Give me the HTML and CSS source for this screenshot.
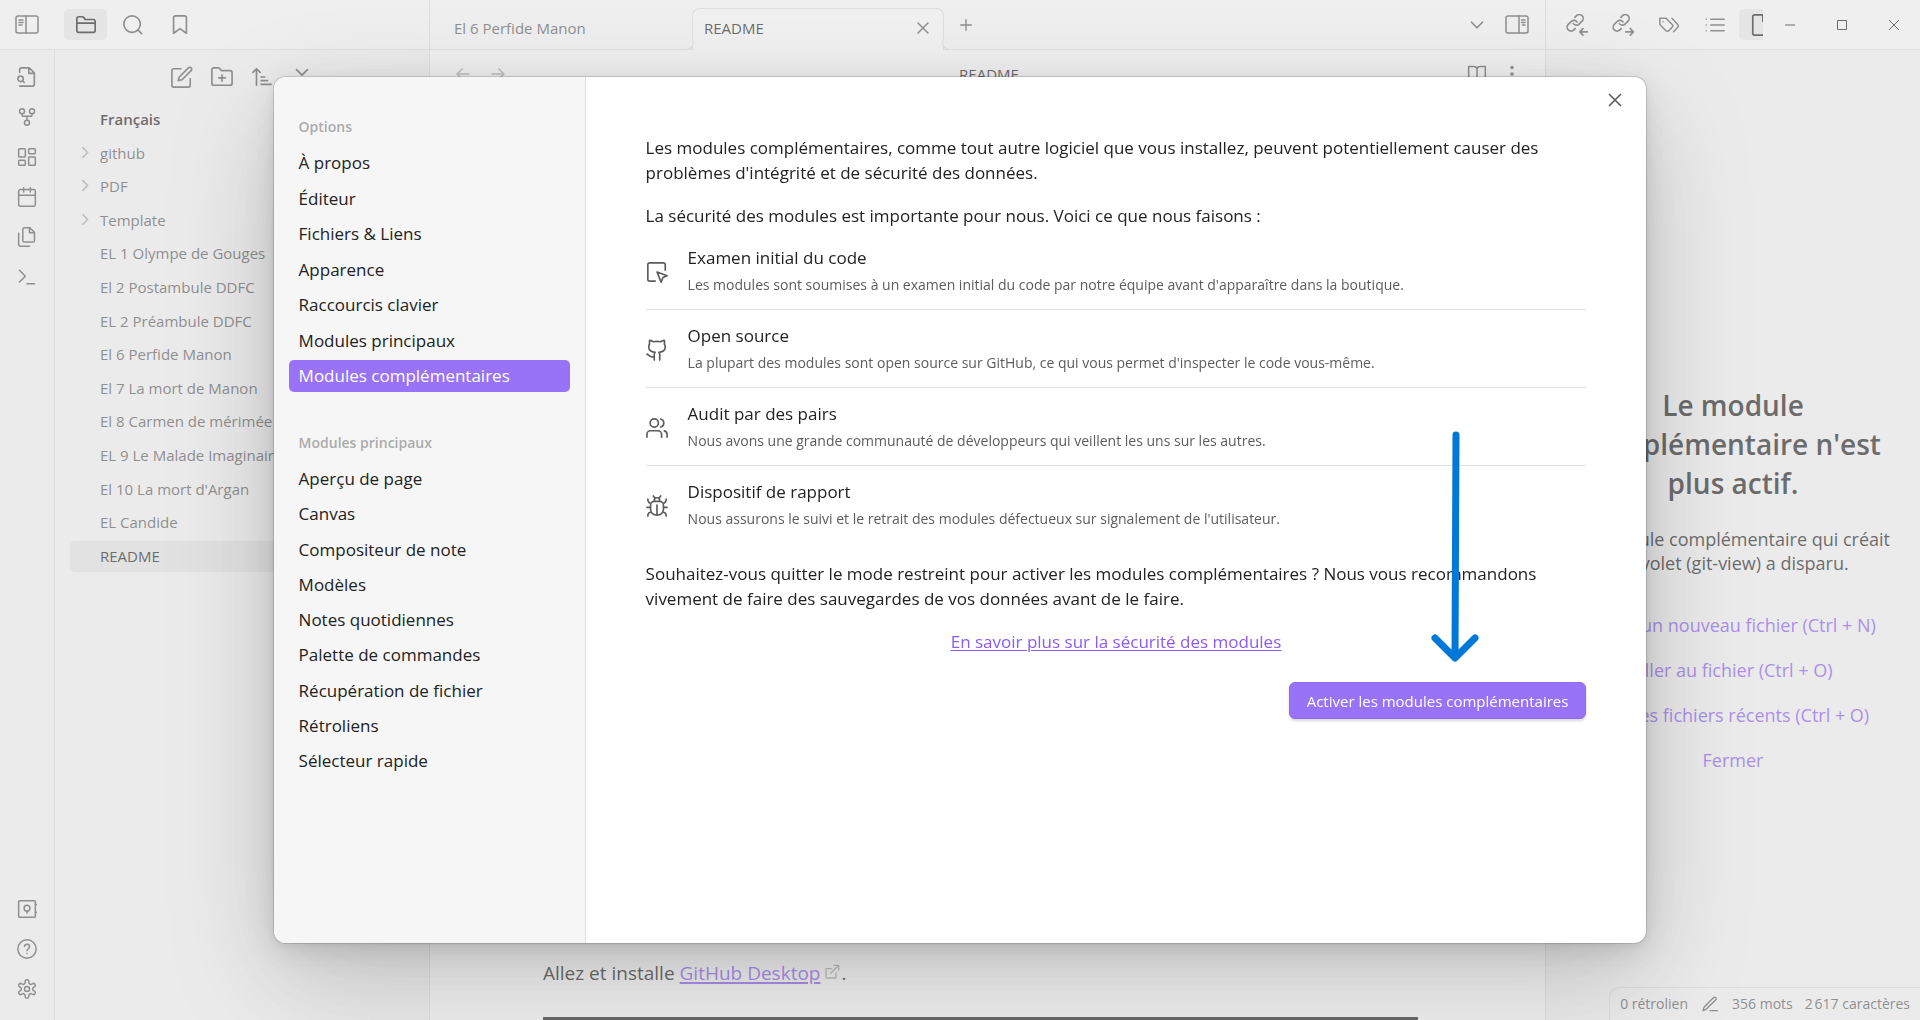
FILE: index.html
```html
<!DOCTYPE html>
<html lang="fr">
<head>
<meta charset="utf-8">
<meta name="viewport" content="width=device-width, initial-scale=1">
<title>README - Obsidian</title>
<link rel="stylesheet" href="styles.css">
</head>
<body>
<svg class="sprite" aria-hidden="true">
  <symbol id="panel-left" viewBox="0 0 24 24"><rect x="1" y="3" width="22" height="17" rx="2"/><path d="M11 3v17M4 7h4M4 9.500h4M4 12h3"/></symbol>
  <symbol id="panel-right" viewBox="0 0 24 24"><rect x="1" y="3" width="22" height="17" rx="2"/><path d="M14 3v17M16.500 7H20M16.500 9.500H20M17.500 12H20"/></symbol>
  <symbol id="folder" viewBox="0 0 24 24"><path d="M4 20h16a2 2 0 0 0 2-2V8a2 2 0 0 0-2-2h-7.930a2 2 0 0 1-1.660-.9l-.82-1.200A2 2 0 0 0 7.930 3H4a2 2 0 0 0-2 2v13c0 1.100.9 2 2 2ZM2 10h20"/></symbol>
  <symbol id="search" viewBox="0 0 24 24"><circle cx="11" cy="11" r="9"/><path d="m21.500 21.500-4-4"/></symbol>
  <symbol id="bookmark" viewBox="0 0 24 24"><path d="m19 21-7-5-7 5V4a2 2 0 0 1 2-2h10a2 2 0 0 1 2 2v17z"/></symbol>
  <symbol id="file-search" viewBox="0 0 24 24"><path d="M4 22h14a2 2 0 0 0 2-2V7.500L14.500 2H6a2 2 0 0 0-2 2v3M14 2v6h6M9 18l-1.500-1.500"/><circle cx="5" cy="14" r="3"/></symbol>
  <symbol id="fork" viewBox="0 0 24 24"><circle cx="12" cy="19" r="3"/><circle cx="6" cy="5" r="3"/><circle cx="18" cy="5" r="3"/><path d="M18 8v2c0 .6-.4 1-1 1H7c-.6 0-1-.4-1-1V8M12 11v5"/></symbol>
  <symbol id="dashboard" viewBox="0 0 24 24"><rect x="2" y="2" width="8" height="10" rx="1"/><rect x="14" y="2" width="8" height="6" rx="1"/><rect x="14" y="12" width="8" height="10" rx="1"/><rect x="2" y="16" width="8" height="6" rx="1"/></symbol>
  <symbol id="calendar" viewBox="0 0 24 24"><rect x="2" y="3" width="20" height="20" rx="2"/><path d="M16 1v5M8 1v5M2 10h20"/></symbol>
  <symbol id="files" viewBox="0 0 24 24"><path d="M15.500 1H8.600C7.700 1 7 1.700 7 2.600v13.800c0 .9.700 1.600 1.600 1.600h10.800c.9 0 1.600-.7 1.600-1.600V6.500L15.500 1zM2 7.600v13.800c0 .9.700 1.600 1.600 1.600H15M15 1v6h6"/></symbol>
  <symbol id="terminal" viewBox="0 0 24 24"><path d="m3 18 7-7-7-7M12 20h9"/></symbol>
  <symbol id="vault" viewBox="0 0 24 24"><rect x="2" y="2" width="20" height="20" rx="1"/><circle cx="12" cy="11" r="3.500"/><path d="M12 14.500V17M22 6.500h1.500M22 16h1.500"/></symbol>
  <symbol id="help" viewBox="0 0 24 24"><circle cx="12" cy="12" r="11"/><path d="M9 9a3 3 0 0 1 6 .5c0 2-3 2.500-3 4.500M12 17.500h.01"/></symbol>
  <symbol id="gear" viewBox="0 0 24 24"><path d="M12.220 1h-.44a2 2 0 0 0-2 2v1.180a2 2 0 0 1-1 1.730l-.43.250a2 2 0 0 1-2 0l-1.150-.58a2 2 0 0 0-2.730.73l-.22.380a2 2 0 0 0 .73 2.730l1.150.6a2 2 0 0 1 1 1.720v.51a2 2 0 0 1-1 1.740l-1.150.59a2 2 0 0 0-.73 2.730l.22.380a2 2 0 0 0 2.730.73l1.150-.58a2 2 0 0 1 2 0l.43.250a2 2 0 0 1 1 1.730V21a2 2 0 0 0 2 2h.44a2 2 0 0 0 2-2v-1.180a2 2 0 0 1 1-1.730l.43-.25a2 2 0 0 1 2 0l1.150.58a2 2 0 0 0 2.730-.73l.22-.39a2 2 0 0 0-.73-2.730l-1.150-.58a2 2 0 0 1-1-1.740v-.5a2 2 0 0 1 1-1.740l1.150-.59a2 2 0 0 0 .73-2.730l-.22-.38a2 2 0 0 0-2.730-.73l-1.150.58a2 2 0 0 1-2 0l-.43-.25a2 2 0 0 1-1-1.730V3a2 2 0 0 0-2-2z"/><circle cx="12" cy="12" r="3"/></symbol>
  <symbol id="edit" viewBox="0 0 24 24"><path d="M11 3H3a2 2 0 0 0-2 2v16a2 2 0 0 0 2 2h16a2 2 0 0 0 2-2v-7M19 2a2.120 2.120 0 0 1 3 3L12 15l-4 1 1-4L19 2z"/></symbol>
  <symbol id="folder-plus" viewBox="0 0 24 24"><path d="M3 21h18a2 2 0 0 0 2-2V7a2 2 0 0 0-2-2h-8.930a2 2 0 0 1-1.660-.9l-.82-1.200A2 2 0 0 0 7.930 2H3a2 2 0 0 0-2 2v15c0 1.100.9 2 2 2ZM12 9.500v7M8.500 13h7"/></symbol>
  <symbol id="sort" viewBox="0 0 24 24"><path d="m2 7 4-4 4 4M6 3v18M11 12h4M11 16h7M11 20h11"/></symbol>
  <symbol id="collapse" viewBox="0 0 24 24"><path d="m6 4 6 6 6-6M6 22l6-6 6 6"/></symbol>
  <symbol id="chevron-right" viewBox="0 0 24 24"><path d="m7 3 9 9-9 9"/></symbol>
  <symbol id="chevron-down" viewBox="0 0 24 24"><path d="m6 9 6 6 6-6"/></symbol>
  <symbol id="x" viewBox="0 0 24 24"><path d="M18 6 6 18M6 6l12 12"/></symbol>
  <symbol id="plus" viewBox="0 0 24 24"><path d="M12 4v16M4 12h16"/></symbol>
  <symbol id="arrow-left" viewBox="0 0 24 24"><path d="m11 4-8 8 8 8M21 12H3"/></symbol>
  <symbol id="arrow-right" viewBox="0 0 24 24"><path d="m13 4 8 8-8 8M3 12h18"/></symbol>
  <symbol id="book" viewBox="0 0 24 24"><path d="M2 3h6a4 4 0 0 1 4 4v14a3 3 0 0 0-3-3H2zM22 3h-6a4 4 0 0 0-4 4v14a3 3 0 0 1 3-3h7z"/></symbol>
  <symbol id="dots" viewBox="0 0 24 24"><g class="filled"><circle cx="12" cy="5" r="1"/><circle cx="12" cy="12" r="1"/><circle cx="12" cy="19" r="1"/></g></symbol>
  <symbol id="chain" viewBox="0 0 24 24"><path d="M8 10.500a4.200 4.200 0 0 0 6.300.5l3.200-3.200a4.200 4.200 0 0 0-6-6L9.700 3.600M12 8.700a4.200 4.200 0 0 0-6.300-.5l-3.200 3.200a4.200 4.200 0 0 0 6 6l1.500-1.500"/></symbol>
  <symbol id="link-in" viewBox="0 0 24 24"><use href="#chain"/><path d="M23.500 19.500H15M18.500 16 15 19.500l3.500 3.500"/></symbol>
  <symbol id="link-out" viewBox="0 0 24 24"><use href="#chain"/><path d="M15 19.500h8.500M20 16l3.500 3.500L20 23"/></symbol>
  <symbol id="tags" viewBox="0 0 24 24"><path d="M8.500 4H1v7.500l7.290 7.290c.94.940 2.480.940 3.420 0l4.080-4.080c.94-.94.940-2.480 0-3.420L8.500 4ZM5 8.010V8M15.500 4l7 7.300a2.400 2.400 0 0 1 0 3.400L17.500 20"/></symbol>
  <symbol id="list" viewBox="0 0 24 24"><path d="M7 5h16M7 12h16M7 19h16M1.500 5h.01M1.500 12h.01M1.500 19h.01"/></symbol>
  <symbol id="file" viewBox="0 0 24 24"><path d="M15 1H5a2 2 0 0 0-2 2v18a2 2 0 0 0 2 2h14a2 2 0 0 0 2-2V7zM14 1v7h7"/></symbol>
  <symbol id="inspect" viewBox="0 0 24 24"><path d="M21 10V4a2 2 0 0 0-2-2H4a2 2 0 0 0-2 2v16a2 2 0 0 0 2 2h6M12 12l4.500 11 2-5 4.500-2Z"/></symbol>
  <symbol id="github" viewBox="0 0 24 24"><path d="M15 23v-5a4.800 4.800 0 0 0-1-3.500c3.500 0 7-2 7-5.500.08-1.250-.27-2.480-1-3.500.28-1.150.28-2.850 0-4 0 0-1 0-4 1.500-2.640-.5-5.360-.5-8 0C5 1.500 4 1.500 4 1.500c-.3 1.150-.3 2.850 0 4A5.400 5.400 0 0 0 3 9c0 3.500 3.500 5.500 7 5.500-.39.490-.68 1.050-.85 1.650-.17.600-.22 1.230-.15 1.850v5M9 19c-5 2-5.500-2-8-2.500"/></symbol>
  <symbol id="users" viewBox="0 0 24 24"><path d="M17 22v-3a4 4 0 0 0-4-4H5a4 4 0 0 0-4 4v3M23 22v-3a4 4 0 0 0-3-3.870M16 2.130a4.500 4.500 0 0 1 0 8.750"/><circle cx="9" cy="6.500" r="4.500"/></symbol>
  <symbol id="bug" viewBox="0 0 24 24"><path d="m8 1 1.880 2.500M14.120 3.500 16 1M9 7V6a3 3 0 1 1 6 0v1M12 22c-3.900 0-7-2.700-7-6v-5a4 4 0 0 1 4-4h6a4 4 0 0 1 4 4v5c0 3.300-3.100 6-7 6M12 21V11M5.530 9C3.600 8.800 2 7.100 2 4.500M5 13.500H1M2 23c0-2.600 1.700-4.400 3.800-4.500M22 4.500c0 2.600-1.600 4.300-3.500 4.500M23 13.500h-4M18.200 18.500c2.100.1 3.800 1.900 3.800 4.500"/></symbol>
  <symbol id="pencil" viewBox="0 0 24 24"><path d="M12 22h11M17 2.500a2.120 2.120 0 0 1 3.500 3.500L6 20l-4.500 2L3 17Z"/></symbol>
  <symbol id="external" viewBox="0 0 24 24"><path d="M18 13v8H3V7h8M15 2h7v7M10 14 22 2"/></symbol>
</svg>

<div class="app">
  <section class="left">
    <header class="bar left-bar">
      <button class="bar-toggle" aria-label="Réduire la barre"><svg class="icon large"><use href="#panel-left"/></svg></button>
      <button class="bar-tab active" aria-label="Fichiers"><svg class="icon"><use href="#folder"/></svg></button>
      <button class="bar-tab" aria-label="Rechercher"><svg class="icon"><use href="#search"/></svg></button>
      <button class="bar-tab" aria-label="Signets"><svg class="icon"><use href="#bookmark"/></svg></button>
    </header>
    <div class="left-body">
      <nav class="ribbon" aria-label="Ruban">
        <button aria-label="Sélecteur rapide"><svg class="icon"><use href="#file-search"/></svg></button>
        <button aria-label="Vue graphique"><svg class="icon small"><use href="#fork"/></svg></button>
        <button aria-label="Canvas"><svg class="icon small"><use href="#dashboard"/></svg></button>
        <button aria-label="Note du jour"><svg class="icon small"><use href="#calendar"/></svg></button>
        <button aria-label="Modèle"><svg class="icon small"><use href="#files"/></svg></button>
        <button aria-label="Commandes"><svg class="icon small"><use href="#terminal"/></svg></button>
        <span class="grow"></span>
        <button aria-label="Coffre"><svg class="icon small"><use href="#vault"/></svg></button>
        <button aria-label="Aide"><svg class="icon small"><use href="#help"/></svg></button>
        <button aria-label="Paramètres"><svg class="icon small"><use href="#gear"/></svg></button>
      </nav>
      <div class="explorer">
        <div class="explorer-tools">
          <button aria-label="Nouvelle note"><svg class="icon"><use href="#edit"/></svg></button>
          <button aria-label="Nouveau dossier"><svg class="icon"><use href="#folder-plus"/></svg></button>
          <button aria-label="Trier"><svg class="icon"><use href="#sort"/></svg></button>
          <button aria-label="Tout replier"><svg class="icon"><use href="#collapse"/></svg></button>
        </div>
        <ul class="tree">
          <li class="tree-root">Français</li>
          <li><svg class="icon caret"><use href="#chevron-right"/></svg>github</li>
          <li><svg class="icon caret"><use href="#chevron-right"/></svg>PDF</li>
          <li><svg class="icon caret"><use href="#chevron-right"/></svg>Template</li>
          <li>EL 1 Olympe de Gouges</li>
          <li>El 2 Postambule DDFC</li>
          <li>EL 2 Préambule DDFC</li>
          <li>El 6 Perfide Manon</li>
          <li>El 7 La mort de Manon</li>
          <li>El 8 Carmen de mérimée</li>
          <li>EL 9 Le Malade Imaginaire</li>
          <li>El 10 La mort d'Argan</li>
          <li>EL Candide</li>
          <li class="current">README</li>
        </ul>
      </div>
    </div>
  </section>

  <main class="center">
    <header class="bar tabs">
      <div class="tab">El 6 Perfide Manon</div>
      <div class="tab open"><span>README</span><button aria-label="Fermer l'onglet"><svg class="icon small"><use href="#x"/></svg></button></div>
      <button class="new-tab" aria-label="Nouvel onglet"><svg class="icon tiny"><use href="#plus"/></svg></button>
      <span class="grow"></span>
      <button class="tab-list" aria-label="Liste des onglets"><svg class="icon"><use href="#chevron-down"/></svg></button>
      <button aria-label="Réduire la barre droite"><svg class="icon large"><use href="#panel-right"/></svg></button>
    </header>
    <div class="view-head">
      <span class="view-side"><button class="faint" aria-label="Précédent"><svg class="icon tiny"><use href="#arrow-left"/></svg></button><button class="faint" aria-label="Suivant"><svg class="icon tiny"><use href="#arrow-right"/></svg></button></span>
      <span class="view-title">README</span>
      <span class="view-side end"><button aria-label="Mode lecture"><svg class="icon small"><use href="#book"/></svg></button><button aria-label="Plus d'options"><svg class="icon"><use href="#dots"/></svg></button></span>
    </div>
    <article class="note">
      <p>Allez et installe <a href="#desktop">GitHub Desktop</a><svg class="icon ext"><use href="#external"/></svg>.</p>
      <hr>
    </article>
  </main>

  <aside class="right">
    <header class="bar right-bar">
      <div class="right-tabs">
        <button class="bar-tab" aria-label="Rétroliens"><svg class="icon"><use href="#link-in"/></svg></button>
        <button class="bar-tab" aria-label="Liens sortants"><svg class="icon"><use href="#link-out"/></svg></button>
        <button class="bar-tab" aria-label="Tags"><svg class="icon small"><use href="#tags"/></svg></button>
        <button class="bar-tab" aria-label="Sommaire"><svg class="icon small"><use href="#list"/></svg></button>
        <button class="bar-tab active" aria-label="git-view"><svg class="icon"><use href="#file"/></svg></button>
      </div>
      <div class="window-buttons">
        <button aria-label="Réduire"><svg class="win"><path d="M1 6h10"/></svg></button>
        <button aria-label="Agrandir"><svg class="win"><path d="M1.500 1.500h9v9h-9z"/></svg></button>
        <button aria-label="Fermer la fenêtre"><svg class="win"><path d="m1 1 10 10M11 1 1 11"/></svg></button>
      </div>
    </header>
    <div class="empty">
      <h2>Le module complémentaire n'est plus actif.</h2>
      <p>Le module complémentaire qui créait ce volet (git-view) a disparu.</p>
      <a href="#new">Créer un nouveau fichier (Ctrl + N)</a>
      <a href="#go">Aller au fichier (Ctrl + O)</a>
      <a href="#recent">Voir les fichiers récents (Ctrl + O)</a>
      <a href="#close">Fermer</a>
    </div>
  </aside>

  <footer class="status">
    <span>0 rétrolien</span>
    <svg class="icon tiny"><use href="#pencil"/></svg>
    <span>356 mots</span>
    <span>2&#8239;617 caractères</span>
  </footer>
</div>

<div class="overlay">
  <div class="modal" role="dialog" aria-modal="true" aria-label="Options">
    <nav class="settings-nav">
      <h3>Options</h3>
      <ul class="options">
        <li><a href="#about">À propos</a></li>
        <li><a href="#editor">Éditeur</a></li>
        <li><a href="#files-links">Fichiers &amp; Liens</a></li>
        <li><a href="#appearance">Apparence</a></li>
        <li><a href="#hotkeys">Raccourcis clavier</a></li>
        <li><a href="#core">Modules principaux</a></li>
        <li><a class="selected" href="#community">Modules complémentaires</a></li>
      </ul>
      <h3>Modules principaux</h3>
      <ul class="core">
        <li><a href="#preview">Aperçu de page</a></li>
        <li><a href="#canvas">Canvas</a></li>
        <li><a href="#composer">Compositeur de note</a></li>
        <li><a href="#templates">Modèles</a></li>
        <li><a href="#daily">Notes quotidiennes</a></li>
        <li><a href="#palette">Palette de commandes</a></li>
        <li><a href="#recovery">Récupération de fichier</a></li>
        <li><a href="#backlinks">Rétroliens</a></li>
        <li><a href="#switcher">Sélecteur rapide</a></li>
      </ul>
    </nav>
    <section class="settings-body">
      <button class="modal-close" aria-label="Fermer"><svg class="icon"><use href="#x"/></svg></button>
      <p>Les modules complémentaires, comme tout autre logiciel que vous installez, peuvent potentiellement causer des problèmes d'intégrité et de sécurité des données.</p>
      <p>La sécurité des modules est importante pour nous. Voici ce que nous faisons :</p>
      <ul class="measures">
        <li><svg class="icon"><use href="#inspect"/></svg><div><h4>Examen initial du code</h4><p>Les modules sont soumises à un examen initial du code par notre équipe avant d'apparaître dans la boutique.</p></div></li>
        <li><svg class="icon"><use href="#github"/></svg><div><h4>Open source</h4><p>La plupart des modules sont open source sur GitHub, ce qui vous permet d'inspecter le code vous-même.</p></div></li>
        <li><svg class="icon"><use href="#users"/></svg><div><h4>Audit par des pairs</h4><p>Nous avons une grande communauté de développeurs qui veillent les uns sur les autres.</p></div></li>
        <li><svg class="icon"><use href="#bug"/></svg><div><h4>Dispositif de rapport</h4><p>Nous assurons le suivi et le retrait des modules défectueux sur signalement de l'utilisateur.</p></div></li>
      </ul>
      <p>Souhaitez-vous quitter le mode restreint pour activer les modules complémentaires ? Nous vous recommandons vivement de faire des sauvegardes de vos données avant de le faire.</p>
      <p class="more"><a href="#security">En savoir plus sur la sécurité des modules</a></p>
      <div class="actions">
        <button class="enable">Activer les modules complémentaires</button>
        <svg class="pointer" viewBox="0 0 48 232" aria-hidden="true"><path d="M25 4 24 227M4 207l20 20 20-20"/></svg>
      </div>
    </section>
  </div>
</div>
</body>
</html>
```

FILE: styles.css
```css
* { box-sizing: border-box; }

body {
  margin: 0;
  height: 100vh;
  overflow: hidden;
  font-family: "Open Sans", "Noto Sans", sans-serif;
  font-size: 15px;
  line-height: 24px;
  color: #5c5c5c;
  background: #ffffff;
}

h2, h3, h4, p, ul { margin: 0; padding: 0; font-size: inherit; }
ul { list-style: none; }

button {
  display: flex;
  align-items: center;
  justify-content: center;
  padding: 0;
  border: 0;
  background: none;
  color: inherit;
  font: inherit;
}

.sprite { display: none; }
.icon {
  flex: none;
  width: 22px;
  height: 22px;
  fill: none;
  stroke: currentColor;
  stroke-width: 1.8;
  stroke-linecap: round;
  stroke-linejoin: round;
}
.icon.large { width: 24px; height: 24px; stroke-width: 1.5; }
.icon.small { width: 20px; height: 20px; }
.icon.tiny { width: 16px; height: 16px; stroke-width: 2; }
.filled { fill: currentColor; }
.grow { flex: 1; }

/* Workspace */
.app {
  display: grid;
  grid-template-columns: 430px 1fr 375px;
  height: 100%;
}
.left, .center, .right { display: flex; flex-direction: column; min-width: 0; min-height: 0; }
.left { border-right: 1px solid #e0e0e0; background: #f6f6f6; }
.right { border-left: 1px solid #e0e0e0; background: #f6f6f6; }

.bar {
  flex: none;
  display: flex;
  align-items: center;
  height: 50px;
  border-bottom: 1px solid #e0e0e0;
  background: #fcfcfc;
}
.bar-toggle { width: 54px; height: 31px; }
.left-bar { gap: 4px; }
.left-bar .bar-toggle { margin-right: 6px; }
.bar-tab { flex: none; width: 43px; height: 31px; border-radius: 5px; }
.bar-tab.active { background: #ececec; color: #222222; }

.left-body { display: flex; flex: 1; min-height: 0; }
.ribbon {
  display: flex;
  flex-direction: column;
  gap: 9px;
  width: 55px;
  padding: 11px 0 16px;
  border-right: 1px solid #e0e0e0;
}
.ribbon button { height: 31px; }

.explorer { flex: 1; min-width: 0; }
.explorer-tools { display: flex; justify-content: center; gap: 18px; padding: 16px 0; }
.tree {
  display: flex;
  flex-direction: column;
  justify-content: space-between;
  min-height: 468px;
  padding: 0 15px;
}
.tree li {
  position: relative;
  padding: 0 8px 0 30px;
  border-radius: 5px;
  line-height: 31px;
  white-space: nowrap;
}
.tree .tree-root { font-weight: 600; color: #222222; }
.tree .current { background: #e6e6e6; color: #222222; }
.caret {
  position: absolute;
  left: 9px;
  top: 8px;
  width: 13px;
  height: 13px;
  stroke-width: 3;
  color: #ababab;
}

/* Editor column */
.tabs { padding: 0 16px 0 12px; }
.tab { width: 250px; padding: 6px 12px 0; white-space: nowrap; }
.tab.open {
  position: relative;
  align-self: flex-end;
  display: flex;
  align-items: center;
  justify-content: space-between;
  width: 252px;
  height: 42px;
  margin-bottom: -1px;
  padding: 0 10px 3px 11px;
  border: 1px solid #e0e0e0;
  border-bottom: 0;
  border-radius: 8px 8px 0 0;
  background: #ffffff;
  color: #222222;
}
.tab.open button { color: #5c5c5c; }
.tab.open::before, .tab.open::after {
  content: "";
  position: absolute;
  bottom: 0;
  width: 8px;
  height: 8px;
  border-bottom: 1px solid #e0e0e0;
  background: #fcfcfc;
}
.tab.open::before { left: -8px; border-right: 1px solid #e0e0e0; border-bottom-right-radius: 8px; }
.tab.open::after { right: -8px; border-left: 1px solid #e0e0e0; border-bottom-left-radius: 8px; }
.new-tab { width: 44px; }
.tab-list { margin-right: 17px; }

.view-head { display: flex; align-items: center; height: 48px; padding: 0 22px 0 25px; }
.view-side { display: flex; flex: 1; align-items: center; gap: 19px; }
.view-side.end { gap: 14px; justify-content: flex-end; }
.view-title { color: #222222; }
.faint { color: #ababab; }

.note {
  display: flex;
  flex: 1;
  flex-direction: column;
  justify-content: flex-end;
  width: calc(100% - 240px);
  margin: 0 127px 0 113px;
  font-size: 19px;
  color: #222222;
}
.note a, .more a { color: #8a5cf5; text-underline-offset: 2px; }
.note a { text-decoration-thickness: 2px; }
.note hr { width: 100%; height: 3px; margin: 32px 0 0; border: 0; background: #222222; }
.ext { width: 16px; height: 16px; margin: 0 1px 0 4px; stroke-width: 2; color: #ababab; }

/* Right sidebar */
.right-bar { justify-content: space-between; }
.right-tabs { display: flex; gap: 3px; width: 217px; padding-left: 9px; overflow: hidden; }
.window-buttons { display: flex; }
.window-buttons button { width: 52px; height: 31px; }
.win { width: 12px; height: 12px; fill: none; stroke: #222222; stroke-width: 1; }

.empty {
  display: flex;
  flex: 1;
  flex-direction: column;
  align-items: center;
  justify-content: center;
  padding: 108px 24px 0;
  font-size: 18px;
  text-align: center;
}
.empty h2 { margin-bottom: 24px; font-size: 28px; font-weight: 600; line-height: 39px; color: #222222; }
.empty p { margin-bottom: 38px; color: #222222; }
.empty a { margin-bottom: 21px; color: #8a5cf5; text-decoration: none; white-space: nowrap; }

.status {
  position: fixed;
  right: 0;
  bottom: 0;
  display: flex;
  align-items: center;
  gap: 12px;
  height: 33px;
  padding: 0 10px;
  border: 1px solid #e0e0e0;
  border-width: 1px 0 0 1px;
  border-radius: 10px 0 0 0;
  background: #f6f6f6;
  font-size: 14px;
}
.status .icon { margin: 0 2px; }

/* Settings dialog */
.overlay {
  position: fixed;
  inset: 0;
  display: flex;
  align-items: center;
  justify-content: center;
  background: rgba(220, 220, 220, 0.4);
}
.modal {
  display: flex;
  width: 71.5vw;
  height: 84.9vh;
  border-radius: 12px;
  overflow: hidden;
  background: #ffffff;
  color: #222222;
  font-size: 17px;
  box-shadow: 0 0 0 1px rgba(0, 0, 0, 0.12), 0 2px 9px rgba(0, 0, 0, 0.07), 0 8px 31px rgba(0, 0, 0, 0.11), 0 38px 112px rgba(0, 0, 0, 0.2);
}
.settings-nav {
  flex: none;
  width: 312px;
  padding: 35px 15px;
  border-right: 1px solid #e0e0e0;
  background: #f6f6f6;
}
.settings-nav h3 { padding: 3px 10px 8px; font-size: 14px; font-weight: 600; line-height: 24px; color: #ababab; }
.settings-nav ul { display: flex; flex-direction: column; justify-content: space-between; }
.options { min-height: 245px; margin-bottom: 36px; }
.core { min-height: 314px; }
.settings-nav a {
  display: block;
  padding: 0 10px;
  border-radius: 5px;
  line-height: 32px;
  color: inherit;
  text-decoration: none;
}
.settings-nav .selected { background: #9873f7; color: #ffffff; }

.settings-body { position: relative; flex: 1; min-width: 0; padding: 58px 60px; }
.settings-body > p { margin-bottom: 18px; line-height: 25px; }
.modal-close { position: absolute; top: 12px; right: 20px; color: #5c5c5c; }
.measures { margin-bottom: 30px; }
.measures li {
  display: flex;
  align-items: center;
  gap: 20px;
  padding: 14px 0 12px;
  border-bottom: 1px solid #e0e0e0;
}
.measures li:first-child { padding-top: 0; }
.measures li:last-child { padding-bottom: 0; border: 0; }
.measures .icon { color: #5c5c5c; }
.measures h4 { font-weight: 400; line-height: 24px; }
.measures p { margin-top: 3px; font-size: 14px; line-height: 24px; color: #5c5c5c; }
.settings-body .more { text-align: center; }
.actions { position: relative; display: flex; justify-content: flex-end; padding-top: 10px; }
.enable {
  height: 37px;
  padding: 0 17px;
  border: 1px solid #8f69ea;
  border-radius: 6px;
  background: #9873f7;
  color: #ffffff;
  font-size: 15px;
  box-shadow: 0 2px 3px rgba(0, 0, 0, 0.15);
}
.pointer {
  position: absolute;
  right: 107px;
  bottom: 56px;
  width: 48px;
  height: 232px;
  fill: none;
  stroke: #0078d7;
  stroke-width: 7;
  stroke-linecap: round;
  stroke-linejoin: round;
}
```
